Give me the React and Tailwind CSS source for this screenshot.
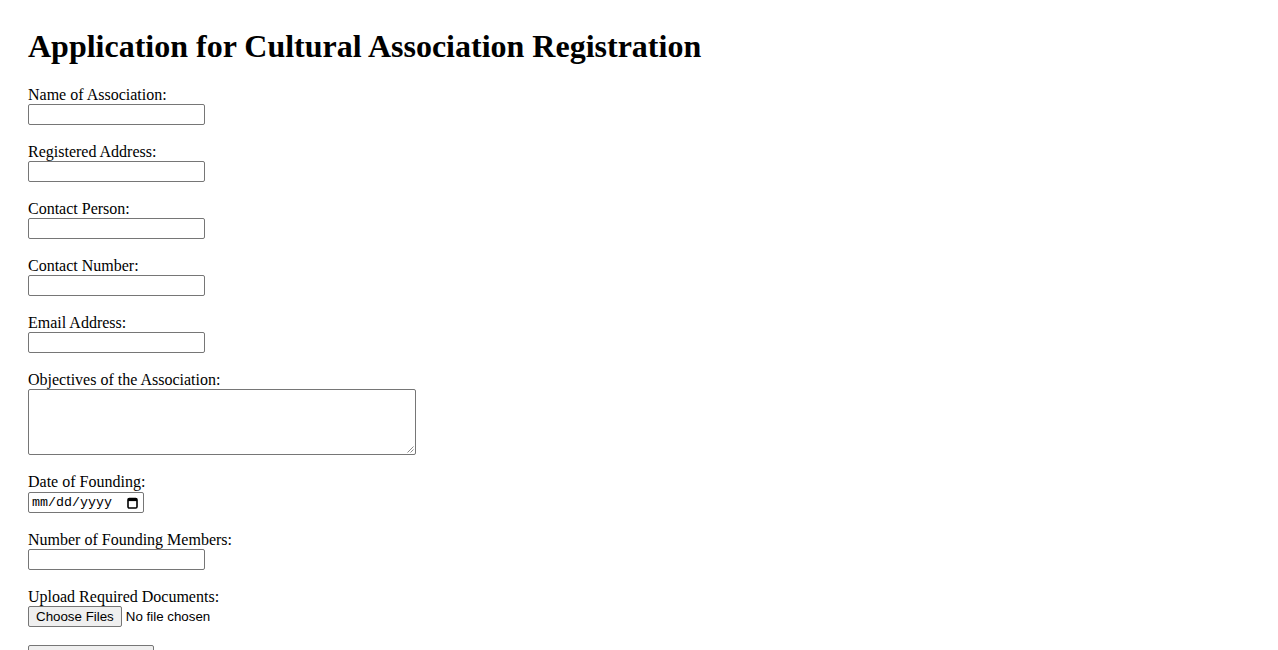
// Registration form, drawn to look like the browser's default form controls
const TEXT_FIELDS_TOP = [
    'Name of Association:',
    'Registered Address:',
    'Contact Person:',
    'Contact Number:',
    'Email Address:',
]

function Label({ children }) {
    return (
        <label className="block h-[18px] leading-[18px] text-[16px] text-black font-['Liberation_Serif',serif]">
            {children}
        </label>
    )
}

function TextInput() {
    return (
        <input
            type="text"
            className="block w-[177px] h-[21px] border border-[#767676] rounded-[2px] bg-white px-[2px] text-[13.33px] font-['Liberation_Sans',sans-serif] outline-none"
        />
    )
}

function Field({ label, children }) {
    return (
        <div className="mb-[18px]">
            <Label>{label}</Label>
            {children}
        </div>
    )
}

// Маленький значок календаря как у Chrome
function CalendarIcon() {
    return (
        <svg width="11" height="12" viewBox="0 0 11 12" fill="none">
            <rect x="1" y="1.5" width="9" height="9.5" rx="1.3" stroke="#000" strokeWidth="1.6" />
            <rect x="1" y="1.5" width="9" height="2.6" fill="#000" />
        </svg>
    )
}

function ResizeGrip() {
    return (
        <svg width="7" height="7" viewBox="0 0 7 7" className="absolute right-[1px] bottom-[1px]">
            <line x1="6.5" y1="0.5" x2="0.5" y2="6.5" stroke="#8a8a8a" strokeWidth="1" />
            <line x1="6.5" y1="3.5" x2="3.5" y2="6.5" stroke="#8a8a8a" strokeWidth="1" />
        </svg>
    )
}

export default function App() {
    return (
        <div className="bg-white min-h-screen px-[28px] pt-[28px] text-black font-['Liberation_Serif',serif]">
            <h1 className="text-[32px] font-bold leading-[37px] mb-[21px] font-['Liberation_Serif',serif]">
                Application for Cultural Association Registration
            </h1>

            <form onSubmit={(e) => e.preventDefault()}>
                {TEXT_FIELDS_TOP.map((label) => (
                    <Field key={label} label={label}>
                        <TextInput />
                    </Field>
                ))}

                <Field label="Objectives of the Association:">
                    <div className="relative w-[388px] h-[66px] border border-[#767676] rounded-[2px] bg-white">
                        <textarea className="block w-full h-full resize-none outline-none bg-transparent p-[2px] text-[13.33px] font-['Liberation_Mono',monospace]" />
                        <ResizeGrip />
                    </div>
                </Field>

                <div className="mb-[18px]">
                    <div className="h-[19px]">
                        <Label>Date of Founding:</Label>
                    </div>
                    <div className="flex items-center justify-between w-[116px] h-[21px] border border-[#767676] rounded-[2px] bg-white pl-[3px] pr-[5px]">
                        <span className="text-[13.33px] leading-[15px] text-black font-['Liberation_Mono',monospace]">mm/dd/yyyy</span>
                        <CalendarIcon />
                    </div>
                </div>

                <Field label="Number of Founding Members:">
                    <TextInput />
                </Field>

                <Field label="Upload Required Documents:">
                    <div className="flex items-center h-[21px]">
                        <button
                            type="button"
                            className="h-[21px] px-[7px] bg-[#efefef] border border-[#767676] rounded-[2px] text-[13.33px] leading-[15px] text-black font-['Liberation_Sans',sans-serif]"
                        >
                            Choose Files
                        </button>
                        <span className="ml-[4px] text-[13.33px] font-['Liberation_Sans',sans-serif]">No file chosen</span>
                    </div>
                </Field>

                <button
                    type="submit"
                    className="block w-[126px] h-[21px] bg-[#efefef] border border-[#767676] rounded-[2px] text-[13.33px] leading-[15px] text-black font-['Liberation_Sans',sans-serif]"
                >
                    Submit Application
                </button>
            </form>
        </div>
    )
}
